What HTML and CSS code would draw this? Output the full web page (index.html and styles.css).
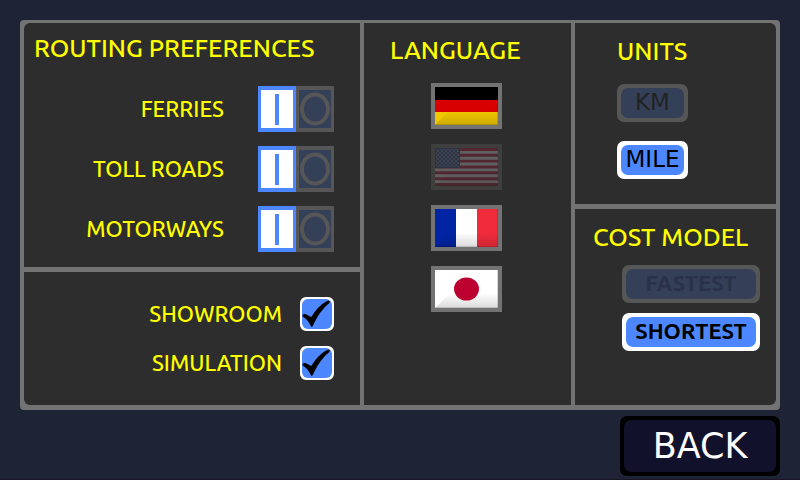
FILE: index.html
```html
<!DOCTYPE html>
<html lang="en">
<head>
<meta charset="utf-8">
<title>Navigation settings</title>
<link rel="stylesheet" href="styles.css">
</head>
<body>
<svg class="defs" aria-hidden="true">
  <defs>
    <linearGradient id="sheen" x1="0" y1="0" x2="0" y2="1">
      <stop offset="0" stop-color="#fff" stop-opacity="0"/>
      <stop offset=".6" stop-color="#000" stop-opacity="0"/>
      <stop offset="1" stop-color="#000" stop-opacity=".14"/>
    </linearGradient>
    <pattern id="stars" width="4" height="4" patternUnits="userSpaceOnUse">
      <path d="M0 1h2M2 3h2" stroke="#b4bdd4" stroke-width="1"/>
    </pattern>
    <symbol id="tick" viewBox="0 0 34 34">
      <path d="M0.500 18.500C2 16 4.500 17 6 18L10.500 20.500C15 13 21 6 28 2.500C31 1.500 32.300 2.500 31 4.500C23 11 17.500 19.500 13 29C12 31.500 11 32.500 10 30.500C8 26 5 22.500 0.500 19.500Z"/>
    </symbol>
    <symbol id="bevel" viewBox="0 0 63 38">
      <path d="M0 38L13 25H50V13L63 0V38Z" fill="url(#sheen)"/>
      <path d="M0 37.500H63M62.500 0V38" stroke="#000" stroke-opacity=".14" fill="none"/>
    </symbol>
  </defs>
</svg>
<main class="screen">
  <div class="panel">
    <div class="column">
      <section class="cell routing">
        <h2>ROUTING PREFERENCES</h2>
        <div class="options">
          <label class="option"><span class="name">FERRIES</span>
            <span class="switch"><input type="checkbox" role="switch" checked><span class="on"></span><span class="off"><svg viewBox="0 0 32 38"><ellipse cx="16" cy="19" rx="13" ry="14.500"/></svg></span></span></label>
          <label class="option"><span class="name">TOLL ROADS</span>
            <span class="switch"><input type="checkbox" role="switch" checked><span class="on"></span><span class="off"><svg viewBox="0 0 32 38"><ellipse cx="16" cy="19" rx="13" ry="14.500"/></svg></span></span></label>
          <label class="option"><span class="name">MOTORWAYS</span>
            <span class="switch"><input type="checkbox" role="switch" checked><span class="on"></span><span class="off"><svg viewBox="0 0 32 38"><ellipse cx="16" cy="19" rx="13" ry="14.500"/></svg></span></span></label>
        </div>
      </section>
      <section class="cell modes">
        <label class="option"><span class="name">SHOWROOM</span>
          <span class="check"><input type="checkbox" checked><svg><use href="#tick"/></svg></span></label>
        <label class="option"><span class="name">SIMULATION</span>
          <span class="check"><input type="checkbox" checked><svg><use href="#tick"/></svg></span></label>
      </section>
    </div>
    <section class="cell language">
      <h2>LANGUAGE</h2>
      <div class="flags">
        <button class="flag" aria-label="Deutsch"><svg viewBox="0 0 63 38">
          <path d="M0 0H63V13H0Z" fill="#000"/><path d="M0 13H63V25H0Z" fill="#d80000"/><path d="M0 25H63V38H0Z" fill="#f0c800"/>
          <use href="#bevel"/></svg></button>
        <button class="flag dim" aria-label="English" aria-pressed="true"><svg viewBox="0 0 63 38">
          <path d="M0 0H63V38H0Z" fill="#f4f4f4"/>
          <path d="M0 1.500H63M0 7.300H63M0 13.100H63M0 19H63M0 24.800H63M0 30.700H63M0 36.500H63" stroke="#c0143c" stroke-width="2.900"/>
          <path d="M0 0H25V20H0Z" fill="#2c4a8c"/><path d="M1 1H24V19H1Z" fill="url(#stars)"/>
          <use href="#bevel"/></svg></button>
        <button class="flag" aria-label="Français"><svg viewBox="0 0 63 38">
          <path d="M0 0H21V38H0Z" fill="#0024a4"/><path d="M21 0H42V38H21Z" fill="#fff"/><path d="M42 0H63V38H42Z" fill="#f02c3c"/>
          <use href="#bevel"/></svg></button>
        <button class="flag" aria-label="日本語"><svg viewBox="0 0 63 38">
          <path d="M0 0H63V38H0Z" fill="#fff"/><use href="#bevel"/><ellipse cx="31.500" cy="19" rx="12.500" ry="11.500" fill="#bc0030"/></svg></button>
      </div>
    </section>
    <div class="column">
      <section class="cell units">
        <h2>UNITS</h2>
        <div class="choices">
          <button class="choice plain dim">KM</button>
          <button class="choice plain" aria-pressed="true">MILE</button>
        </div>
      </section>
      <section class="cell cost">
        <h2>COST MODEL</h2>
        <div class="choices">
          <button class="choice dim faint">FASTEST</button>
          <button class="choice" aria-pressed="true">SHORTEST</button>
        </div>
      </section>
    </div>
  </div>
  <button class="back">BACK</button>
</main>
</body>
</html>
```
FILE: styles.css
```css
* { box-sizing: border-box; }

body {
  margin: 0;
  background: #1e2336;
  color: #ff0;
  font-family: Ubuntu, "Open Sans", sans-serif;
}

button {
  margin: 0;
  padding: 0;
  font: inherit;
  cursor: pointer;
}

.defs { position: absolute; width: 0; height: 0; }

.screen {
  display: flex;
  flex-direction: column;
  min-height: 100vh;
  padding: 20px 20px 3px;
  border-bottom: 1px solid #191527;
}

.panel {
  display: grid;
  grid-template-columns: 336fr 207fr 201fr;
  gap: 4px;
  border: solid #737373;
  border-width: 3px 4px 5px;
  border-radius: 4px;
  background: #737373;
  overflow: hidden;
}

.column { display: flex; flex-direction: column; gap: 5px; }

.cell { background: #2d2d2d; }

.column > :last-child { flex: 1; }

.column:first-child > :first-child { border-top-left-radius: 6px; }
.column:first-child > :last-child { border-bottom-left-radius: 6px; }
.column:last-child > :first-child { border-top-right-radius: 6px; }
.column:last-child > :last-child { border-bottom-right-radius: 6px; }

h2 {
  margin: 0;
  font-size: 25px;
  font-weight: 500;
  line-height: 32px;
  white-space: nowrap;
}

.name { font-size: 22px; font-weight: 500; line-height: 32px; }

.routing { padding: 9px 26px 15px 10px; }
.options { display: grid; gap: 14px; margin-top: 22px; }
.option { display: flex; align-items: center; justify-content: flex-end; gap: 34px; }

.switch { position: relative; display: flex; }

.switch input,
.check input {
  position: absolute;
  inset: 0;
  width: 100%;
  height: 100%;
  margin: 0;
  opacity: 0;
}

.on,
.off {
  display: grid;
  place-items: center;
  width: 38px;
  height: 46px;
  border: solid #4c87ff;
  border-width: 4px 3px;
  background: #fff;
}

.on::before { content: ""; width: 4px; height: 31px; background: #4c87ff; }
.off { border-color: #565656; background: #343f58; }
.off svg { width: 32px; height: 38px; fill: none; stroke: #565656; stroke-width: 4; }

.modes { display: grid; align-content: start; gap: 15px; padding: 25px 26px; }
.modes .option { gap: 18px; }

.check {
  position: relative;
  width: 34px;
  height: 34px;
  border: 2px solid #fff;
  border-radius: 6px;
  background: #fff;
}

.check svg {
  display: block;
  width: 30px;
  height: 30px;
  border-radius: 6px;
  background: #4c87ff;
}

.language { padding: 11px 26px; }
.flags { display: grid; justify-content: center; gap: 15px; margin: 17px 2px 0 0; }

.flag {
  width: 71px;
  height: 46px;
  border: 4px solid #737373;
  background: #737373;
}

.flag svg { display: block; width: 63px; height: 38px; }
.flag.dim { opacity: .25; }

.units { padding: 12px 42px 25px; }
.cost { padding: 12px 16px 54px 18px; }
.choices { display: grid; gap: 19px; margin-top: 17px; }
.units .choices { width: 71px; }
.cost .choices { gap: 10px; margin-top: 12px; margin-left: 29px; }

.choice,
.back {
  position: relative;
  isolation: isolate;
  border: 0;
  border-radius: 7px;
}

.choice::before,
.back::before {
  content: "";
  position: absolute;
  inset: 4px;
  z-index: -1;
  border-radius: 7px;
  background: #4c87ff;
}

.choice {
  height: 38px;
  padding-bottom: 2px;
  background: #fff;
  color: #000;
  font-size: 22px;
  font-weight: 600;
  line-height: 30px;
}

.plain { font-family: "DejaVu Sans", sans-serif; font-size: 23px; font-weight: 400; }

.choice.dim { background: #565656; color: #232323; }
.choice.dim::before { background: #343f58; }
.choice.faint { color: #293248; }

.back {
  align-self: flex-end;
  width: 160px;
  height: 60px;
  margin-top: 6px;
  background: #000;
  color: #fff;
  font-family: "DejaVu Sans", sans-serif;
  font-size: 35px;
}

.back::before { background: #11112b; }
```
